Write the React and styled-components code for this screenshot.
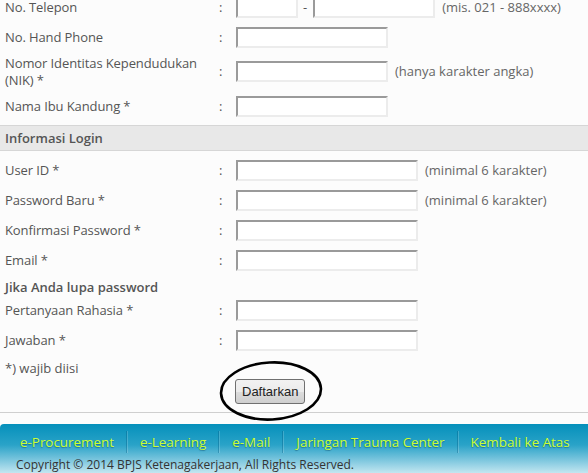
import React from "react"
import styled, { createGlobalStyle } from "styled-components"

const Global = createGlobalStyle`
  html, body {
    margin: 0;
    padding: 0;
    background: #fcfcfc;
    overflow: hidden;
  }
  body {
    font-family: "Century Gothic", "Open Sans", "Liberation Sans", sans-serif;
    font-size: 13px;
    color: #555;
  }
`

const Page = styled.div`
  width: 588px;
  height: 473px;
  overflow: hidden;
  background: #fcfcfc;
`

const Form = styled.div`
  margin-top: -8px;
`

const Row = styled.div`
  display: grid;
  grid-template-columns: 214px 17px 1fr;
  align-items: center;
  padding: ${({ tight }) => (tight ? "2.5px" : "4.5px")} 0 ${({ tight }) => (tight ? "2.5px" : "4.5px")} 5px;
  min-height: 21px;
  line-height: 17px;
`

const Label = styled.div`
  letter-spacing: -0.1px;
`

const Colon = styled.div`
  color: #555;
`

const Field = styled.div`
  display: flex;
  align-items: center;
  gap: 7px;
`

const Input = styled.div`
  box-sizing: border-box;
  width: ${({ w }) => w}px;
  height: 21px;
  background: #fff;
  border-top: 2px solid #9a9a9a;
  border-left: 2px solid #9a9a9a;
  border-right: 2px solid #ececec;
  border-bottom: 2px solid #ececec;
`

const Hint = styled.span`
  color: #666;
  white-space: nowrap;
`

const Dash = styled.span`
  color: #555;
  margin: 0 -1px 0 -2px;
`

const Section = styled.div`
  margin: 4px 0 4px;
  height: 24px;
  line-height: 24px;
  background: #e8e8e8;
  border-top: 1px solid #d6d6d6;
  border-bottom: 1px solid #d6d6d6;
  padding-left: 5px;
  font-weight: 600;
  color: #555;
`

const SubTitle = styled.div`
  padding: 4px 0 0 5px;
  height: 16px;
  line-height: 16px;
  font-weight: 600;
  color: #555;
`

const Note = styled.div`
  padding: 5px 0 0 5px;
  height: 16px;
  line-height: 16px;
`

const ButtonRow = styled.div`
  padding: 3px 0 0 235px;
  height: 25px;
`

const ButtonWrap = styled.div`
  position: relative;
  display: inline-block;
`

const Button = styled.button`
  height: 25px;
  padding: 0 6px;
  font-family: "Liberation Sans", Arial, sans-serif;
  font-size: 13px;
  color: #222;
  border: 1px solid #707070;
  border-radius: 3px;
  background: linear-gradient(#f2f2f2 0%, #ebebeb 50%, #dddddd 51%, #cfcfcf 100%);
`

const Ellipse = styled.svg`
  position: absolute;
  left: -16px;
  top: -19px;
  pointer-events: none;
`

const Rule = styled.div`
  margin-top: 8px;
  height: 1px;
  background: #cfcfcf;
`

const Footer = styled.div`
  margin-top: 11px;
  height: 60px;
  border-top-left-radius: 4px;
  background: linear-gradient(#0590bb 0%, #2aa3c8 35%, #7cc6de 60%, #cdebf3 85%, #e4f5f9 100%);
`

const Links = styled.div`
  display: flex;
  align-items: center;
  padding: 8px 0 0 20px;
  height: 20px;
`

const Link = styled.a`
  color: #ccff33;
  font-size: 13.4px;
  text-decoration: none;
  text-shadow: 0 1px 1px rgba(0, 60, 90, 0.45);
  white-space: nowrap;
  padding: 0 ${({ last }) => (last ? 0 : 12)}px 0 ${({ first }) => (first ? 0 : 13)}px;
  border-left: ${({ first }) => (first ? "none" : "1px solid rgba(0, 90, 130, 0.35)")};
  box-shadow: ${({ first }) => (first ? "none" : "inset 1px 0 0 rgba(255,255,255,0.18)")};
  line-height: 22px;
`

const Copyright = styled.div`
  padding: 6px 0 0 16px;
  font-size: 12px;
  color: #333;
  line-height: 14px;
`

const FormRow = ({ label, tight, children }) => (
  <Row tight={tight}>
    <Label>{label}</Label>
    <Colon>:</Colon>
    <Field>{children}</Field>
  </Row>
)

export default function App() {
  return (
    <Page>
      <Global />
      <Form>
        <FormRow label="No. Telepon">
          <Input w={62} />
          <Dash>-</Dash>
          <Input w={122} />
          <Hint>(mis. 021 - 888xxxx)</Hint>
        </FormRow>
        <FormRow label="No. Hand Phone">
          <Input w={152} />
        </FormRow>
        <FormRow tight label={<>Nomor Identitas Kependudukan<br />(NIK) *</>}>
          <Input w={152} />
          <Hint>(hanya karakter angka)</Hint>
        </FormRow>
        <FormRow label="Nama Ibu Kandung *">
          <Input w={152} />
        </FormRow>

        <Section>Informasi Login</Section>

        <FormRow label="User ID *">
          <Input w={182} />
          <Hint>(minimal 6 karakter)</Hint>
        </FormRow>
        <FormRow label="Password Baru *">
          <Input w={182} />
          <Hint>(minimal 6 karakter)</Hint>
        </FormRow>
        <FormRow label="Konfirmasi Password *">
          <Input w={182} />
        </FormRow>
        <FormRow label="Email *">
          <Input w={182} />
        </FormRow>

        <SubTitle>Jika Anda lupa password</SubTitle>

        <FormRow label="Pertanyaan Rahasia *">
          <Input w={182} />
        </FormRow>
        <FormRow label="Jawaban *">
          <Input w={182} />
        </FormRow>

        <Note>*) wajib diisi</Note>

        <ButtonRow>
          <ButtonWrap>
            <Button>Daftarkan</Button>
            <Ellipse width="104" height="62" viewBox="0 0 104 62">
              <ellipse cx="52" cy="31" rx="50" ry="28.5" fill="none" stroke="#000" strokeWidth="2.6" transform="rotate(-3 52 31)" />
            </Ellipse>
          </ButtonWrap>
        </ButtonRow>

        <Rule />

        <Footer>
          <Links>
            <Link first>e-Procurement</Link>
            <Link>e-Learning</Link>
            <Link>e-Mail</Link>
            <Link>Jaringan Trauma Center</Link>
            <Link last>Kembali ke Atas</Link>
          </Links>
          <Copyright>Copyright © 2014 BPJS Ketenagakerjaan, All Rights Reserved.</Copyright>
        </Footer>
      </Form>
    </Page>
  )
}
